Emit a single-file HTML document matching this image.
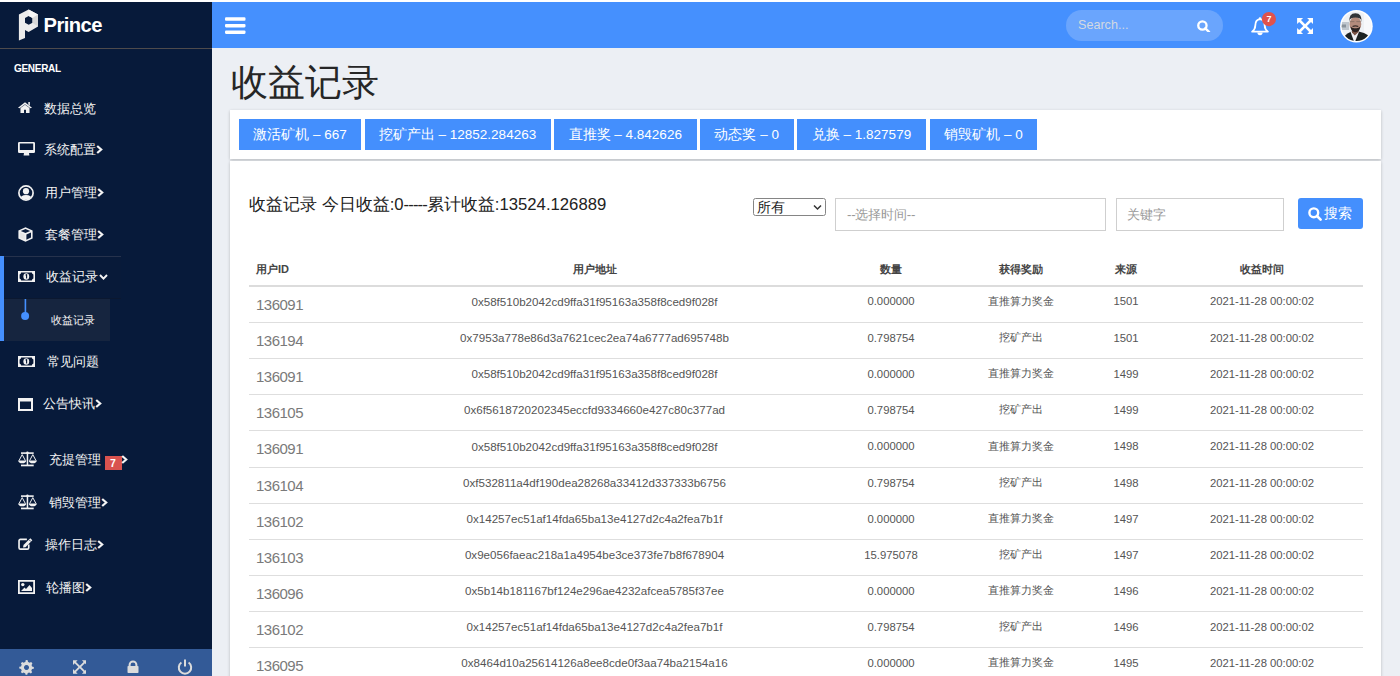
<!DOCTYPE html>
<html><head><meta charset="utf-8">
<style>
*{margin:0;padding:0;box-sizing:border-box}
html,body{width:1400px;height:676px;overflow:hidden;background:#fff;font-family:"Liberation Sans",sans-serif}
svg{display:block;position:absolute}
#side{position:absolute;left:0;top:2px;width:212px;height:674px;background:#071a3a;color:#fff;overflow:hidden}
#logo{position:absolute;left:0;top:0;width:212px;height:47px;border-bottom:1px solid #4e4b4c}
#logo .txt{position:absolute;left:43.5px;top:11px;letter-spacing:-0.55px;font-size:20.2px;font-weight:bold;color:#fff;line-height:24px}
#gen{position:absolute;left:14px;top:61px;letter-spacing:-0.3px;font-size:10px;font-weight:bold;color:#fff;line-height:12px}
.mi{position:absolute;left:0;width:212px;height:20px;font-size:13px;color:#f4f4f4;white-space:nowrap;line-height:20px}
.mi .t{position:absolute;top:0}
.chev{display:inline-block;vertical-align:top;width:7px;height:9px;position:relative;top:5px}.chev path{fill:none;stroke:#f4f4f4;stroke-width:2.2}
.chevd{display:inline-block;vertical-align:top;position:relative;top:7px;margin-left:1px}.chevd path{fill:none;stroke:#f4f4f4;stroke-width:1.9}
#act{position:absolute;left:0;top:254px;width:121px;height:43px;border-top:1px solid #26324c;border-bottom:1px solid #0b1830;background:#081a39}
#blue{position:absolute;left:0;top:254px;width:4px;height:85px;background:#4590fe}
#sub{position:absolute;left:4px;top:297px;width:106px;height:42px;background:#16253f}
#foot{position:absolute;left:0;top:647px;width:212px;height:27px;background:#335a97}
#hdr{position:absolute;left:212px;top:2px;width:1188px;height:46px;background:#4590fe}
#srch{position:absolute;left:854px;top:8px;width:157px;height:31px;border-radius:16px;background:#6aa5fd}
#srch .ph{position:absolute;left:12px;top:7.5px;font-size:12.6px;color:#d2d9e2;line-height:15px}
#main{position:absolute;left:212px;top:48px;width:1188px;height:628px;background:#eceff4}
#h1{position:absolute;left:19px;top:14px;font-size:37px;color:#262626;line-height:42px}
.card{position:absolute;background:#fff;box-shadow:0 1px 3px rgba(0,0,0,.22)}
.btn{position:absolute;top:9px;height:31px;background:#448ffd;color:#fff;font-size:13.5px;line-height:31px;text-align:center;white-space:nowrap}
#title{position:absolute;left:19px;top:34.5px;font-size:16.7px;color:#222;line-height:20px;white-space:nowrap}
.inp{position:absolute;border:1px solid #cfcfcf;background:#fff;font-size:14px;color:#999}
#sbtn{position:absolute;left:1068px;top:37px;width:65px;height:31px;border-radius:3px;background:#448ffd;color:#fff;font-size:14.3px;line-height:31px}
table{border-collapse:collapse;position:absolute;left:19px;top:89px;table-layout:fixed}
th{font-size:11px;font-weight:bold;color:#444;height:36px;text-align:center;border-bottom:2px solid #dcdcdc;padding-top:5px;white-space:nowrap}
td{font-size:11.3px;color:#555;height:36px;text-align:center;border-bottom:1px solid #dedede;white-space:nowrap;padding-bottom:6px}td:nth-child(2){font-size:11.6px}
td.id{font-size:15px;letter-spacing:-0.5px;color:#7a7a7a;text-align:left;padding-left:7px;padding-bottom:0.5px;padding-top:0}
th.id{text-align:left;padding-left:7px}
</style></head><body>
<div id="side">
  <div id="logo">
    <svg style="left:18px;top:7px" width="21" height="32" viewBox="0 0 21 32">
      <path d="M10.6 0.5 L20 5.6 L20 17.6 L10.6 22.9 L7 20.9 L7 28.9 L0.9 31.5 L0.9 5.6 Z M10.7 6.9 L7 9 L7 13.7 L10.7 15.7 L14.5 13.7 L14.5 9 Z" fill="#ececec" fill-rule="evenodd"/>
      <path d="M10.6 0.5 L20 5.6 L14.5 9 L10.7 6.9 Z" fill="#f6f6f6"/>
      <path d="M20 5.6 L20 17.6 L14.5 13.7 L14.5 9 Z" fill="#d8d8d8"/>
    </svg>
    <div class="txt">Prince</div>
  </div>
  <div id="gen">GENERAL</div>

  <div class="mi" style="top:97px">
    <svg style="left:18px;top:2.6px" width="14" height="11" viewBox="0 0 13 10"><path d="M6.5 0.2 L13 5.3 L11.6 5.8 L6.5 1.9 L1.4 5.8 L0 5.3 Z M2.3 5.5 L6.5 2.4 L10.7 5.5 L10.7 10 L7.4 10 L7.4 7 L5.6 7 L5.6 10 L2.3 10 Z M9.6 0 L11 0 L11 3.3 L9.6 2.2Z" fill="#f2f2f2"/></svg>
    <span class="t" style="left:44px">数据总览</span>
  </div>
  <div class="mi" style="top:138px">
    <svg style="left:18px;top:2px" width="17" height="14" viewBox="0 0 17 14"><path d="M1.3 0 H15.7 A1.3 1.3 0 0 1 17 1.3 V9.7 A1.3 1.3 0 0 1 15.7 11 H1.3 A1.3 1.3 0 0 1 0 9.7 V1.3 A1.3 1.3 0 0 1 1.3 0 Z M1.8 1.6 V7.9 H15.2 V1.6 Z" fill="#f2f2f2" fill-rule="evenodd"/><path d="M6 11 H11 L11.4 13.6 H5.6Z" fill="#f2f2f2"/></svg>
    <span class="t" style="left:44px">系统配置<svg class="chev" style="position:relative;display:inline-block" width="7" height="9" viewBox="0 0 7 9"><path d="M1.2 1 L5.2 4.5 L1.2 8"/></svg></span>
  </div>
  <div class="mi" style="top:181px">
    <svg style="left:18px;top:2px" width="16" height="16" viewBox="0 0 16 16"><defs><clipPath id="uc"><circle cx="8" cy="8" r="6.6"/></clipPath></defs><circle cx="8" cy="8" r="7.1" fill="none" stroke="#f2f2f2" stroke-width="1.7"/><g clip-path="url(#uc)"><circle cx="8" cy="6.2" r="3.1" fill="#f2f2f2"/><path d="M1.5 16 Q1.8 10 8 10 Q14.2 10 14.5 16Z" fill="#f2f2f2"/></g></svg>
    <span class="t" style="left:45px">用户管理<svg class="chev" style="position:relative;display:inline-block" width="7" height="9" viewBox="0 0 7 9"><path d="M1.2 1 L5.2 4.5 L1.2 8"/></svg></span>
  </div>
  <div class="mi" style="top:223px">
    <svg style="left:18px;top:2px" width="15" height="15" viewBox="0 0 15 15"><path d="M7.5 0.3 L14.6 3.5 V11.4 L7.5 14.7 L0.4 11.4 V3.5 Z" fill="#f2f2f2"/><path d="M7.5 2 L12.2 4 L7.5 6 L2.8 4 Z" fill="#0a1c3c"/><path d="M8.4 7.5 L13 5.5 V10.6 L8.4 12.8 Z" fill="#0a1c3c"/><path d="M2 5.3 L6.8 7.4 V12.6 L2 10.5Z" fill="#e6e6e6"/></svg>
    <span class="t" style="left:45px">套餐管理<svg class="chev" style="position:relative;display:inline-block" width="7" height="9" viewBox="0 0 7 9"><path d="M1.2 1 L5.2 4.5 L1.2 8"/></svg></span>
  </div>

  <div id="act"></div>
  <div id="blue"></div>
  <div class="mi" style="top:265px">
    <svg style="left:18px;top:4px" width="17" height="11" viewBox="0 0 17 11"><rect x="0" y="0" width="17" height="11" fill="#f2f2f2"/><path d="M3.2 1.6 H13.8 A2.2 2.2 0 0 0 15.4 3.4 V7.6 A2.2 2.2 0 0 0 13.8 9.4 H3.2 A2.2 2.2 0 0 0 1.6 7.6 V3.4 A2.2 2.2 0 0 0 3.2 1.6Z" fill="#061634"/><ellipse cx="8.3" cy="5.5" rx="2.9" ry="3.3" fill="#f2f2f2"/><path d="M7.6 4.3 L8.6 3.7 V7.5" stroke="#061634" stroke-width="1.1" fill="none"/></svg>
    <span class="t" style="left:46px">收益记录<svg class="chevd" style="position:relative;display:inline-block" width="9" height="6" viewBox="0 0 9 6"><path d="M1 1 L4.5 4.6 L8 1"/></svg></span>
  </div>
  <div id="sub"></div>
  <svg style="left:21px;top:297px" width="9" height="27" viewBox="0 0 9 27"><rect x="3.6" y="0" width="1.6" height="14" fill="#4590fe"/><circle cx="4.1" cy="17" r="4" fill="#4590fe"/></svg>
  <div class="mi" style="top:308px;font-size:11px">
    <span class="t" style="left:51px">收益记录</span>
  </div>

  <div class="mi" style="top:350px">
    <svg style="left:18px;top:4px" width="17" height="11" viewBox="0 0 17 11"><rect x="0" y="0" width="17" height="11" fill="#f2f2f2"/><path d="M3.2 1.6 H13.8 A2.2 2.2 0 0 0 15.4 3.4 V7.6 A2.2 2.2 0 0 0 13.8 9.4 H3.2 A2.2 2.2 0 0 0 1.6 7.6 V3.4 A2.2 2.2 0 0 0 3.2 1.6Z" fill="#061634"/><ellipse cx="8.3" cy="5.5" rx="2.9" ry="3.3" fill="#f2f2f2"/><path d="M7.6 4.3 L8.6 3.7 V7.5" stroke="#061634" stroke-width="1.1" fill="none"/></svg>
    <span class="t" style="left:47px">常见问题</span>
  </div>
  <div class="mi" style="top:392px">
    <svg style="left:18px;top:4px" width="15" height="13" viewBox="0 0 15 13"><path d="M0 0 H15 V13 H0 Z M2 3.5 V11 H13 V3.5 Z" fill="#f2f2f2" fill-rule="evenodd"/></svg>
    <span class="t" style="left:43px">公告快讯<svg class="chev" style="position:relative;display:inline-block" width="7" height="9" viewBox="0 0 7 9"><path d="M1.2 1 L5.2 4.5 L1.2 8"/></svg></span>
  </div>
  <div class="mi" style="top:448px">
    <svg style="left:18px;top:1px" width="19" height="16" viewBox="0 0 19 16"><rect x="3" y="1.3" width="12.7" height="1.6" fill="#f2f2f2"/><circle cx="9.4" cy="1.8" r="1.2" fill="#f2f2f2"/><rect x="8.7" y="1.5" width="1.5" height="13" fill="#f2f2f2"/><rect x="3" y="13.6" width="12.7" height="1.7" fill="#f2f2f2"/><path d="M4.2 3.6 L1 9.6 M4.2 3.6 L7.4 9.6 M14.8 3.6 L11.6 9.6 M14.8 3.6 L18 9.6" stroke="#f2f2f2" stroke-width="1" fill="none"/><path d="M0.2 9.4 H8.2 Q8 12.2 4.2 12.2 Q0.4 12.2 0.2 9.4Z M10.8 9.4 H18.8 Q18.6 12.2 14.8 12.2 Q11 12.2 10.8 9.4Z" fill="#f2f2f2"/></svg>
    <span class="t" style="left:49px">充提管理</span>
    <span style="position:absolute;left:104.5px;top:5.5px;width:17px;height:14px;background:#d9534f;color:#fff;font-size:10.5px;font-weight:bold;line-height:14px;text-align:center">7</span>
    <svg class="chev" style="position:absolute;left:121px;top:5px" width="7" height="9" viewBox="0 0 7 9"><path d="M1.2 1 L5.2 4.5 L1.2 8"/></svg>
  </div>
  <div class="mi" style="top:490.5px">
    <svg style="left:18px;top:1px" width="19" height="16" viewBox="0 0 19 16"><rect x="3" y="1.3" width="12.7" height="1.6" fill="#f2f2f2"/><circle cx="9.4" cy="1.8" r="1.2" fill="#f2f2f2"/><rect x="8.7" y="1.5" width="1.5" height="13" fill="#f2f2f2"/><rect x="3" y="13.6" width="12.7" height="1.7" fill="#f2f2f2"/><path d="M4.2 3.6 L1 9.6 M4.2 3.6 L7.4 9.6 M14.8 3.6 L11.6 9.6 M14.8 3.6 L18 9.6" stroke="#f2f2f2" stroke-width="1" fill="none"/><path d="M0.2 9.4 H8.2 Q8 12.2 4.2 12.2 Q0.4 12.2 0.2 9.4Z M10.8 9.4 H18.8 Q18.6 12.2 14.8 12.2 Q11 12.2 10.8 9.4Z" fill="#f2f2f2"/></svg>
    <span class="t" style="left:49px">销毁管理<svg class="chev" style="position:relative;display:inline-block" width="7" height="9" viewBox="0 0 7 9"><path d="M1.2 1 L5.2 4.5 L1.2 8"/></svg></span>
  </div>
  <div class="mi" style="top:533px">
    <svg style="left:18px;top:3px" width="15" height="12" viewBox="0 0 16 13"><path d="M9.5 1.5 H2.5 A1.5 1.5 0 0 0 1 3 V10.5 A1.5 1.5 0 0 0 2.5 12 H10 A1.5 1.5 0 0 0 11.5 10.5 V7" fill="none" stroke="#f2f2f2" stroke-width="1.8"/><path d="M13.2 0.3 L15.4 2.5 L8 9.9 L5.3 10.4 L5.8 7.7 Z" fill="#f2f2f2"/><path d="M12 2 L13.8 3.8" stroke="#071a3a" stroke-width="0.8"/></svg>
    <span class="t" style="left:45px">操作日志<svg class="chev" style="position:relative;display:inline-block" width="7" height="9" viewBox="0 0 7 9"><path d="M1.2 1 L5.2 4.5 L1.2 8"/></svg></span>
  </div>
  <div class="mi" style="top:575.5px">
    <svg style="left:18px;top:2.5px" width="17" height="14" viewBox="0 0 17 14"><path d="M0 0 H17 V14 H0 Z M1.8 1.8 V12.2 H15.2 V1.8 Z" fill="#f2f2f2" fill-rule="evenodd"/><circle cx="4.8" cy="4.6" r="1.7" fill="#f2f2f2"/><path d="M3 11 L6.5 7.5 L8 9 L11.5 5 L14 8 V11 Z" fill="#f2f2f2"/></svg>
    <span class="t" style="left:46px">轮播图<svg class="chev" style="position:relative;display:inline-block" width="7" height="9" viewBox="0 0 7 9"><path d="M1.2 1 L5.2 4.5 L1.2 8"/></svg></span>
  </div>

  <div id="foot">
    <svg style="left:19px;top:11px" width="15" height="15" viewBox="0 0 16 16"><path d="M8 0 L9.3 0.2 L9.6 2.1 A6 6 0 0 1 11.2 3 L13 2.2 L14.3 3.6 L13.4 5.3 A6 6 0 0 1 13.9 7 L15.8 7.4 V9.3 L13.9 9.6 A6 6 0 0 1 13.1 11.2 L14 13 L12.6 14.3 L10.9 13.4 A6 6 0 0 1 9.2 14 L8.8 15.8 H7 L6.6 14 A6 6 0 0 1 5 13.3 L3.3 14.2 L2 12.8 L2.9 11.1 A6 6 0 0 1 2.2 9.5 L0.3 9.1 V7.2 L2.2 6.8 A6 6 0 0 1 2.9 5.1 L2 3.4 L3.4 2 L5.1 2.9 A6 6 0 0 1 6.8 2.1 L7.1 0.2 Z M8 5.3 A2.7 2.7 0 1 0 8.01 5.3Z" fill="#dcdcdc" fill-rule="evenodd"/></svg>
    <svg style="left:72.8px;top:11px" width="13.6" height="14" viewBox="0 0 16 16"><path d="M0 0 H5.5 L3.53 1.97 L8 6.44 L12.47 1.97 L10.5 0 H16 V5.5 L14.03 3.53 L9.56 8 L14.03 12.47 L16 10.5 V16 H10.5 L12.47 14.03 L8 9.56 L3.53 14.03 L5.5 16 H0 V10.5 L1.97 12.47 L6.44 8 L1.97 3.53 L0 5.5 Z" fill="#dcdcdc"/></svg>
    <svg style="left:126.5px;top:11px" width="12" height="14" viewBox="0 0 12 14"><path d="M2.6 6.5 V4.8 A3.4 3.4 0 0 1 9.4 4.8 V6.5" fill="none" stroke="#dcdcdc" stroke-width="2"/><rect x="0.5" y="6" width="11" height="7" rx="0.8" fill="#dcdcdc"/></svg>
    <svg style="left:177px;top:10px" width="16" height="16" viewBox="0 0 16 16"><path d="M4.4 3.5 A6.2 6.2 0 1 0 11.6 3.5" fill="none" stroke="#dcdcdc" stroke-width="2"/><path d="M8 0.5 V7.5" stroke="#dcdcdc" stroke-width="2"/></svg>
  </div>
</div>

<div id="hdr">
  <svg style="left:13.3px;top:15px" width="21" height="17" viewBox="0 0 21 17"><rect x="0" y="0.3" width="20.5" height="3.5" rx="1.1" fill="#fff"/><rect x="0" y="6.9" width="20.5" height="3.5" rx="1.1" fill="#fff"/><rect x="0" y="13.4" width="20.5" height="3.5" rx="1.1" fill="#fff"/></svg>
  <div id="srch"><div class="ph">Search...</div>
    <svg style="left:131px;top:9.5px" width="13.5" height="12.6" viewBox="0 0 14 13"><circle cx="5.6" cy="5.6" r="4.3" fill="none" stroke="#fff" stroke-width="2.4"/><path d="M8.6 8.6 L12.4 12.2" stroke="#fff" stroke-width="2.6" stroke-linecap="round"/></svg>
  </div>
  <svg style="left:1038px;top:13.8px" width="22" height="23" viewBox="0 0 22 23"><path d="M7.4 16.6 A2.6 2.6 0 0 0 12.6 16.6Z" fill="#fff"/><path d="M10 3.2 Q5.4 3.6 5.3 9.5 Q5.2 13.3 2.1 15.6 H17.9 Q14.8 13.3 14.7 9.5 Q14.6 3.6 10 3.2Z" fill="none" stroke="#fff" stroke-width="1.8" stroke-linejoin="round"/><circle cx="10" cy="2.6" r="1.3" fill="#fff"/></svg>
  <svg style="left:1049px;top:10px" width="16" height="16" viewBox="0 0 16 16"><circle cx="7.9" cy="7.1" r="7.1" fill="#e0524c"/><text x="7.9" y="10.3" text-anchor="middle" font-family="Liberation Sans" font-weight="bold" font-size="9" fill="#fff">7</text></svg>
  <svg style="left:1084.8px;top:15.8px" width="16.2" height="16" viewBox="0 0 16 16"><path d="M0 0 H6 L3.92 2.08 L8 6.16 L12.08 2.08 L10 0 H16 V6 L13.92 3.92 L9.84 8 L13.92 12.08 L16 10 V16 H10 L12.08 13.92 L8 9.84 L3.92 13.92 L6 16 H0 V10 L2.08 12.08 L6.16 8 L2.08 3.92 L0 6 Z" fill="#fff"/></svg>
  <svg style="left:1127px;top:7px" width="34" height="34" viewBox="0 0 34 34">
    <defs><clipPath id="cp"><circle cx="17.4" cy="17.2" r="14.8"/></clipPath>
    <filter id="bl"><feGaussianBlur stdDeviation="0.6"/></filter></defs>
    <circle cx="17.4" cy="17.2" r="16.3" fill="#fff"/>
    <g clip-path="url(#cp)" filter="url(#bl)">
      <rect width="34" height="34" fill="#eef1f4"/>
      <rect x="0" y="13" width="10" height="8" fill="#bfc6ce"/>
      <rect x="1" y="15.5" width="6" height="3" fill="#8a939c"/>
      <rect x="25" y="0" width="9" height="34" fill="#f8f9fb"/>
      <path d="M3 34 L5 27.5 Q8.5 24 12 22.8 L20.5 22.8 Q25 23.5 29.5 26.5 L31.5 34Z" fill="#1e2023"/>
      <path d="M11.5 22.8 L15.5 34 L20 22.8Z" fill="#eef0f3"/>
      <path d="M13 19 V23.5 L15.8 26.5 L19.6 23 V19Z" fill="#7a5244"/>
      <ellipse cx="16.4" cy="15" rx="5.9" ry="7.2" fill="#b38b7c"/>
      <path d="M10.2 13.5 Q9.6 4.2 16.4 4.2 Q23.2 4.2 22.6 13.5 L22 10.8 Q21.5 8.6 16.4 8.4 Q11.3 8.6 10.8 10.8Z" fill="#333438"/>
      <path d="M11.5 17.5 Q12 23 16.4 23.3 Q20.8 23 21.3 17.5 Q19.5 19.8 16.4 19.2 Q13.3 19.8 11.5 17.5Z" fill="#2c2320"/>
      <path d="M13.2 17 Q16.4 15.6 19.6 17 L19 18 Q16.4 17 13.8 18Z" fill="#3a2c28"/>
      <path d="M11.2 12.6 H15.4 M17.4 12.6 H21.6" stroke="#7e6a62" stroke-width="0.7"/>
    </g>
  </svg>
</div>

<div id="main">
  <div id="h1">收益记录</div>
  <div class="card" style="left:18px;top:62px;width:1151px;height:49px">
    <div class="btn" style="left:9px;width:122px">激活矿机 – 667</div>
    <div class="btn" style="left:134.5px;width:186px">挖矿产出 – 12852.284263</div>
    <div class="btn" style="left:324px;width:142.5px">直推奖 – 4.842626</div>
    <div class="btn" style="left:470px;width:93.5px">动态奖 – 0</div>
    <div class="btn" style="left:567px;width:129px">兑换 – 1.827579</div>
    <div class="btn" style="left:700px;width:107px">销毁矿机 – 0</div>
  </div>
  <div class="card" style="left:18px;top:112.6px;width:1151px;height:600px">
    <div id="title">收益记录 今日收益:0<span style="letter-spacing:-0.9px">-----</span>累计收益:13524.126889</div>
    <div class="inp" style="left:522.5px;top:37px;width:73px;height:18.5px;border:1px solid #858585;border-radius:2.5px;color:#222;font-size:13.5px;line-height:17px;padding-left:3px">所有
      <svg style="left:59px;top:5px" width="9" height="7" viewBox="0 0 9 7"><path d="M1 1.5 L4.5 5 L8 1.5" fill="none" stroke="#333" stroke-width="1.5"/></svg>
    </div>
    <div class="inp" style="left:605px;top:37px;width:271px;height:33px;line-height:31px;padding-left:11px;font-size:13.3px;letter-spacing:-0.2px">--选择时间--</div>
    <div class="inp" style="left:886px;top:37px;width:168px;height:33px;line-height:31px;padding-left:10px;font-size:13.3px">关键字</div>
    <div id="sbtn">
      <svg style="left:10px;top:9px" width="14" height="14" viewBox="0 0 14 14"><circle cx="5.8" cy="5.8" r="4.4" fill="none" stroke="#fff" stroke-width="2.4"/><path d="M9 9 L12.6 12.6" stroke="#fff" stroke-width="2.6" stroke-linecap="round"/></svg>
      <span style="position:absolute;left:26px;top:0">搜索</span>
    </div>
    <table>
      <colgroup><col style="width:109px"><col style="width:473px"><col style="width:120px"><col style="width:140px"><col style="width:70px"><col style="width:202px"></colgroup>
      <tr><th class="id">用户ID</th><th>用户地址</th><th>数量</th><th>获得奖励</th><th>来源</th><th>收益时间</th></tr>
      <tr style="height:37px"><td class="id">136091</td><td>0x58f510b2042cd9ffa31f95163a358f8ced9f028f</td><td>0.000000</td><td>直推算力奖金</td><td>1501</td><td>2021-11-28 00:00:02</td></tr>
      <tr><td class="id">136194</td><td>0x7953a778e86d3a7621cec2ea74a6777ad695748b</td><td>0.798754</td><td>挖矿产出</td><td>1501</td><td>2021-11-28 00:00:02</td></tr>
      <tr><td class="id">136091</td><td>0x58f510b2042cd9ffa31f95163a358f8ced9f028f</td><td>0.000000</td><td>直推算力奖金</td><td>1499</td><td>2021-11-28 00:00:02</td></tr>
      <tr><td class="id">136105</td><td>0x6f5618720202345eccfd9334660e427c80c377ad</td><td>0.798754</td><td>挖矿产出</td><td>1499</td><td>2021-11-28 00:00:02</td></tr>
      <tr style="height:37px"><td class="id">136091</td><td>0x58f510b2042cd9ffa31f95163a358f8ced9f028f</td><td>0.000000</td><td>直推算力奖金</td><td>1498</td><td>2021-11-28 00:00:02</td></tr>
      <tr><td class="id">136104</td><td>0xf532811a4df190dea28268a33412d337333b6756</td><td>0.798754</td><td>挖矿产出</td><td>1498</td><td>2021-11-28 00:00:02</td></tr>
      <tr><td class="id">136102</td><td>0x14257ec51af14fda65ba13e4127d2c4a2fea7b1f</td><td>0.000000</td><td>直推算力奖金</td><td>1497</td><td>2021-11-28 00:00:02</td></tr>
      <tr><td class="id">136103</td><td>0x9e056faeac218a1a4954be3ce373fe7b8f678904</td><td>15.975078</td><td>挖矿产出</td><td>1497</td><td>2021-11-28 00:00:02</td></tr>
      <tr><td class="id">136096</td><td>0x5b14b181167bf124e296ae4232afcea5785f37ee</td><td>0.000000</td><td>直推算力奖金</td><td>1496</td><td>2021-11-28 00:00:02</td></tr>
      <tr><td class="id">136102</td><td>0x14257ec51af14fda65ba13e4127d2c4a2fea7b1f</td><td>0.798754</td><td>挖矿产出</td><td>1496</td><td>2021-11-28 00:00:02</td></tr>
      <tr><td class="id">136095</td><td>0x8464d10a25614126a8ee8cde0f3aa74ba2154a16</td><td>0.000000</td><td>直推算力奖金</td><td>1495</td><td>2021-11-28 00:00:02</td></tr>
    </table>
  </div>
</div>
</body></html>
